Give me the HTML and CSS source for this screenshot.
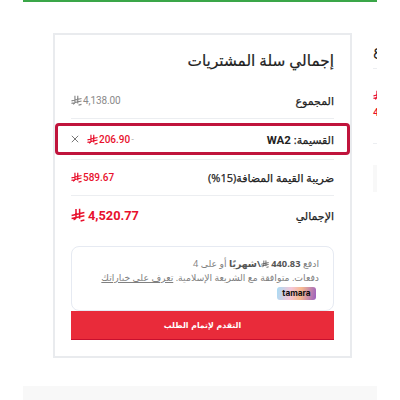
FILE: index.html
```html
<!DOCTYPE html>
<html lang="ar" dir="rtl">
<head>
<meta charset="utf-8">
<title>إجمالي سلة المشتريات</title>
<link rel="stylesheet" href="styles.css">
</head>
<body>
<svg class="defs" width="0" height="0" aria-hidden="true">
  <symbol id="riyal" viewBox="0 0 14 14">
    <path d="M5 1v8.6c0 1-.9 1.7-2.4 2.2M8.6 .8v10M.6 7.4l12.8-2.9M.6 10.6l12.8-2.9M9.6 12.9l3.8-.9" fill="none" stroke="currentColor" stroke-width="1.5"/>
  </symbol>
</svg>
<div class="page">
  <div class="layout">
    <section class="card">
      <h2 class="title">إجمالي سلة المشتريات</h2>
      <div class="row row-sub">
        <span class="label">المجموع</span>
        <span class="amount muted"><svg class="sar"><use href="#riyal"/></svg><span>4,138.00</span></span>
      </div>
      <div class="row row-coupon">
        <span class="label">القسيمة: <b class="code">WA2</b></span>
        <span class="coupon-val">
          <svg class="close" viewBox="0 0 10 10"><path d="M1 1l8 8M9 1l-8 8" stroke="#555" stroke-width="1" fill="none"/></svg>
          <span class="amount red"><svg class="sar"><use href="#riyal"/></svg><span>206.90</span><i class="minus">-</i></span>
        </span>
      </div>
      <div class="row row-tax">
        <span class="label">ضريبة القيمة المضافة(15%)</span>
        <span class="amount red"><svg class="sar"><use href="#riyal"/></svg><span>589.67</span></span>
      </div>
      <div class="row row-total">
        <span class="label">الإجمالي</span>
        <span class="amount red total"><svg class="sar"><use href="#riyal"/></svg><span>4,520.77</span></span>
      </div>
      <div class="tamara">
        <p class="tamara-text">ادفع <b>440.83 <svg class="sar sar-sm"><use href="#riyal"/></svg>\شهريًا</b> أو على 4<br>دفعات. متوافقة مع الشريعة الإسلامية. <a href="#">تعرف على خياراتك</a></p>
        <span class="tamara-logo"><span>tamara</span></span>
      </div>
      <button class="checkout">التقدم لإتمام الطلب</button>
    </section>
    <aside class="side">
      <div class="side-title">ع</div>
      <div class="side-line"></div>
      <div class="side-red"><svg class="sar"><use href="#riyal"/></svg><br>4</div>
      <div class="side-line side-line-b"></div>
      <div class="side-box"></div>
    </aside>
  </div>
  <div class="footer-band"></div>
</div>
</body>
</html>
```
FILE: styles.css
```css
html, body { margin: 0; padding: 0; background: #fff; }
body { width: 400px; height: 400px; overflow: hidden; font-family: "Open Sans", "DejaVu Sans", sans-serif; color: #222; }
.defs { position: absolute; }
.page { width: 354px; height: 400px; margin-right: 23px; overflow: hidden; border-top: 2px solid #3aa648; box-sizing: border-box; }
.layout { display: flex; direction: ltr; height: 384px; padding: 31px 0 0 30px; box-sizing: border-box; gap: 21px; }
.card { direction: rtl; width: 299px; height: 325px; flex: none; box-sizing: border-box; border: 2px solid #e9ebee; padding: 13px 16px 0; }
.title { margin: 0 0 10px; font-size: 15.3px; font-weight: 400; line-height: 24px; color: #222; -webkit-text-stroke: 0.2px #222; }
.row { display: flex; justify-content: space-between; align-items: center; box-sizing: border-box; }
.row-sub { height: 37px; border-bottom: 1px solid #eceef1; }
.row-coupon { height: 32px; margin: 4px 0; position: relative; z-index: 0; }
.row-coupon::before { content: ""; position: absolute; inset: 0 -16px; border: 3px solid #c0143c; border-radius: 4px; z-index: -1; }
.row-tax { height: 37px; border-top: 1px solid #eceef1; border-bottom: 1px solid #eceef1; }
.row-total { height: 38px; margin-bottom: 12px; }
.label { font-size: 11px; color: #222; -webkit-text-stroke: 0.25px #222; }
.code { font-family: Roboto, sans-serif; font-weight: 700; font-size: 11.5px; -webkit-text-stroke: 0; }
.amount { display: inline-flex; direction: ltr; align-items: center; gap: 1px; font-family: Roboto, sans-serif; font-size: 10px; }
.muted { color: #8a8a8a; }
.muted span { letter-spacing: -0.1px; }
.red { color: #e8112d; font-weight: 500; }
.total { font-size: 12.8px; gap: 3px; font-weight: 700; }
.sar { width: 11px; height: 11px; }
.total .sar { width: 14px; height: 14px; }
.coupon-val { display: flex; direction: ltr; align-items: center; gap: 8px; }
.close { width: 8px; height: 8px; }
.minus { font-style: normal; color: #aaa; font-size: 8px; }
.tamara { height: 65px; box-sizing: border-box; border: 1px solid #e6eaf2; border-radius: 8px; padding: 10px 14px 0 8px; position: relative; }
.tamara-text { margin: 0; font-size: 9.3px; line-height: 14px; color: #808080; }
.tamara-text b { color: #555; font-weight: 700; }
.tamara-text a { color: #808080; text-decoration: underline; }
.sar-sm { width: 8px; height: 8px; vertical-align: -1px; }
.tamara-logo { position: absolute; top: 40px; right: 17px; width: 39px; height: 13px; border-radius: 3px; background: linear-gradient(100deg, #a8dcf5, #f5c6d8 35%, #f7b98f 60%, #9b5fc0); text-align: center; }
.tamara-logo span { font-family: Inter, sans-serif; font-weight: 700; font-size: 8.3px; line-height: 12px; color: #111; display: block; }
.checkout { display: block; width: 100%; height: 29px; border: 0; border-bottom: 1px solid #c8102e; background: #e92b3a; color: #fff; font: 700 7.8px "DejaVu Sans", sans-serif; padding: 0; }
.side { width: 120px; flex: none; padding-top: 5px; }
.side-title { font-size: 15px; line-height: 24px; height: 24px; }
.side-line { height: 1px; background: #eceef1; margin-top: 6px; }
.side-red { color: #e8112d; font-family: Roboto, sans-serif; font-size: 10.5px; line-height: 15px; margin-top: 21px; font-weight: 500; }
.side-line-b { margin-top: 23px; }
.side-box { height: 27px; margin-top: 21px; background: #f8f8f8; }
.footer-band { height: 14px; background: #f8f8f8; }
```
